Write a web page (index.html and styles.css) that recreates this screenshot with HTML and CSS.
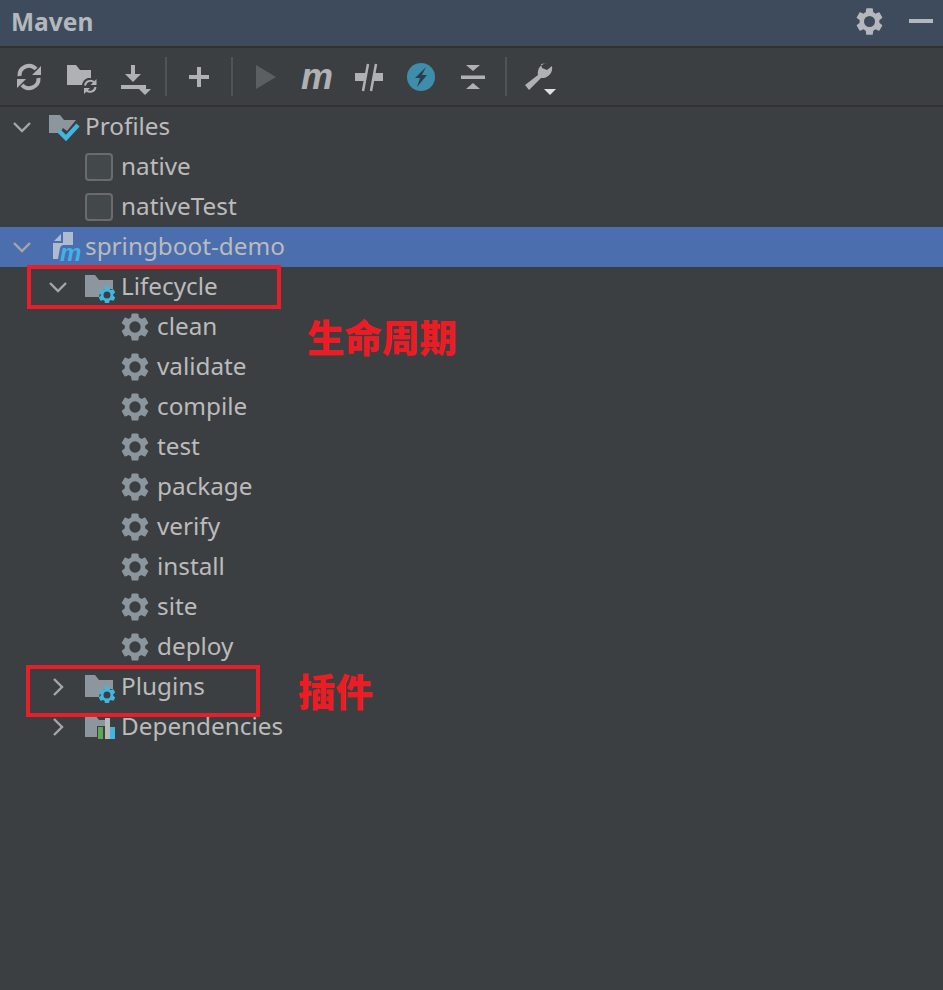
FILE: index.html
```html
<!DOCTYPE html>
<html lang="en">
<head>
<meta charset="utf-8">
<title>Maven</title>
<link rel="stylesheet" href="styles.css">
</head>
<body>
<svg class="defs" width="0" height="0" aria-hidden="true">
  <defs>
    <symbol id="gear" viewBox="0 0 24 24"><path fill-rule="evenodd" d="M19.14 12.94c.04-.3.06-.61.06-.94 0-.32-.02-.64-.07-.94l2.03-1.58a.49.49 0 0 0 .12-.61l-1.92-3.32a.488.488 0 0 0-.59-.22l-2.39.96c-.5-.38-1.03-.7-1.62-.94l-.36-2.54a.484.484 0 0 0-.48-.41h-3.84c-.24 0-.43.17-.47.41l-.36 2.54c-.59.24-1.13.57-1.62.94l-2.39-.96c-.22-.08-.47 0-.59.22L2.74 8.87c-.12.21-.08.47.12.61l2.03 1.58c-.05.3-.09.63-.09.94s.02.64.07.94l-2.03 1.58a.49.49 0 0 0-.12.61l1.92 3.32c.12.22.37.29.59.22l2.39-.96c.5.38 1.03.7 1.62.94l.36 2.54c.05.24.24.41.48.41h3.84c.24 0 .44-.17.47-.41l.36-2.54c.59-.24 1.13-.56 1.62-.94l2.39.96c.22.08.47 0 .59-.22l1.92-3.32c.12-.22.07-.47-.12-.61l-2.01-1.58zM12 16a4 4 0 1 1 0-8 4 4 0 0 1 0 8z"/></symbol>
    <symbol id="chev-down" viewBox="0 0 20 20"><path d="M2 6l8 8 8-8" fill="none" stroke="currentColor" stroke-width="2.4"/></symbol>
    <symbol id="chev-right" viewBox="0 0 20 20"><path d="M6 2l8 8-8 8" fill="none" stroke="currentColor" stroke-width="2.4"/></symbol>
    <symbol id="gear-folder" viewBox="0 0 30 32">
      <path class="folder" d="M0 4h10l4 5h14v9h-8a10 10 0 0 0-6 8H0z"/>
      <use href="#gear" x="11.500" y="13.500" width="21" height="21" class="blue"/>
    </symbol>
  </defs>
</svg>

<main class="panel">
  <header class="title-bar">
    <h1 class="title">Maven</h1>
    <div class="title-actions">
      <svg class="title-gear" width="33" height="33"><use href="#gear"/></svg>
      <span class="minimize"></span>
    </div>
  </header>

  <div class="toolbar">
    <button class="tool" aria-label="Reload"><svg viewBox="3 59 52 36" width="52" height="36"><g fill="none" stroke="#afb1b3" stroke-width="4"><path d="M19.500 76a9.500 9.500 0 0 1 16.500-7"/><path d="M38.500 78a9.500 9.500 0 0 1-16.500 7"/></g><path fill="#afb1b3" d="M41 66v9H32zM17 88V79h9z"/></svg></button>
    <button class="tool" aria-label="Generate"><svg viewBox="55 59 52 36" width="52" height="36"><path fill="#afb1b3" d="M67 65h9l4 5h11v8h-3a9 9 0 0 0-6 7H67z"/><g fill="none" stroke="#afb1b3" stroke-width="2"><path d="M85 85.500a5.500 5.500 0 0 1 9-3.500"/><path d="M95.500 87a5.500 5.500 0 0 1-9 3.500"/></g><path fill="#afb1b3" d="M96.500 79v6h-6zM84 94v-6h6z"/></svg></button>
    <button class="tool" aria-label="Download"><svg viewBox="107 59 52 36" width="52" height="36"><path fill="#afb1b3" d="M131 65h4v9h6l-8 8-8-8h6zM121 85h25v4h-25zM139 89h12l-6 6z"/></svg></button>
    <span class="sep"></span>
    <button class="tool" aria-label="Add"><svg viewBox="173 59 52 36" width="52" height="36"><path fill="#afb1b3" d="M197 67h4v8h8v4h-8v8h-4v-8h-8v-4h8z"/></svg></button>
    <span class="sep"></span>
    <button class="tool" aria-label="Run"><svg viewBox="240 59 52 36" width="52" height="36"><path fill="#5c5f61" d="M257 65l20 12-20 12z"/></svg></button>
    <button class="tool tool-m" aria-label="Execute goal"><span class="m-glyph">m</span></button>
    <button class="tool" aria-label="Skip tests"><svg viewBox="343 59 52 36" width="52" height="36"><path fill="#afb1b3" d="M355 73h10v8h-10zM373 73h10v8h-10z"/><path stroke="#afb1b3" stroke-width="2.500" d="M368 64l-5 27M376 64l-5 27"/></svg></button>
    <button class="tool" aria-label="Offline"><svg viewBox="395 59 52 36" width="52" height="36"><circle cx="421" cy="77" r="14" fill="#3f8dac"/><path fill="#2a3f4b" d="M426 67l-11 11h5l-3 9 10-12h-5z"/></svg></button>
    <button class="tool" aria-label="Collapse all"><svg viewBox="447 59 52 36" width="52" height="36"><path fill="#afb1b3" d="M461 75.500h24v3.500h-24zM466 65h14l-7 6zM473 83l7 6h-14z"/></svg></button>
    <span class="sep"></span>
    <button class="tool" aria-label="Settings"><svg viewBox="514 59 52 36" width="52" height="36"><path fill="#afb1b3" d="M549 63a10 10 0 0 0-10 12l-13 10 4 5 12-12a10 10 0 0 0 11-12l-5 4-5-2-1-4z"/><path fill="#e0e0e0" d="M545 89h12l-6 6z"/></svg></button>
  </div>

  <ul class="tree">
    <li class="row level-0">
      <svg class="chev"><use href="#chev-down"/></svg>
      <svg class="node-icon" viewBox="0 0 30 30"><path class="folder" d="M0 3h11l4 5h12l-9 11-4-3-3 5H0z"/><path d="M10 19l7 7 12-13" fill="none" stroke="#40b6e0" stroke-width="4.500"/></svg>
      <span class="label">Profiles</span>
    </li>
    <li class="row level-1 no-chev">
      <span class="checkbox"></span><span class="label">native</span>
    </li>
    <li class="row level-1 no-chev">
      <span class="checkbox"></span><span class="label">nativeTest</span>
    </li>
    <li class="row level-0 selected">
      <svg class="chev"><use href="#chev-down"/></svg>
      <svg class="node-icon" viewBox="0 0 30 30"><path class="module" d="M5 9l7-7v7zM14 0h10v13H14a4 4 0 0 0-3 3l-2 11H4V11h10z"/><text class="module-m" x="11" y="29">m</text></svg>
      <span class="label">springboot-demo</span>
    </li>
    <li class="row level-1">
      <svg class="chev"><use href="#chev-down"/></svg>
      <svg class="node-icon tall"><use href="#gear-folder"/></svg>
      <span class="label">Lifecycle</span>
    </li>
    <li class="row level-2"><svg class="gear-icon"><use href="#gear"/></svg><span class="label">clean</span></li>
    <li class="row level-2"><svg class="gear-icon"><use href="#gear"/></svg><span class="label">validate</span></li>
    <li class="row level-2"><svg class="gear-icon"><use href="#gear"/></svg><span class="label">compile</span></li>
    <li class="row level-2"><svg class="gear-icon"><use href="#gear"/></svg><span class="label">test</span></li>
    <li class="row level-2"><svg class="gear-icon"><use href="#gear"/></svg><span class="label">package</span></li>
    <li class="row level-2"><svg class="gear-icon"><use href="#gear"/></svg><span class="label">verify</span></li>
    <li class="row level-2"><svg class="gear-icon"><use href="#gear"/></svg><span class="label">install</span></li>
    <li class="row level-2"><svg class="gear-icon"><use href="#gear"/></svg><span class="label">site</span></li>
    <li class="row level-2"><svg class="gear-icon"><use href="#gear"/></svg><span class="label">deploy</span></li>
    <li class="row level-1">
      <svg class="chev"><use href="#chev-right"/></svg>
      <svg class="node-icon tall"><use href="#gear-folder"/></svg>
      <span class="label">Plugins</span>
    </li>
    <li class="row level-1">
      <svg class="chev"><use href="#chev-right"/></svg>
      <svg class="node-icon" viewBox="0 0 30 30"><path class="folder" d="M0 3h10l4 5h14v0h-8v6h-8v11H0z"/><path fill="#5aa754" d="M13 15h5v12h-5z"/><path fill="#b5b9bc" d="M20 6h5v21h-5z"/><path fill="#40b6e0" d="M25 15h5v12h-5z"/></svg>
      <span class="label">Dependencies</span>
    </li>
  </ul>

  <div class="mark mark-lifecycle"></div>
  <div class="mark mark-plugins"></div>
  <div class="note note-lifecycle">生命周期</div>
  <div class="note note-plugins">插件</div>
</main>
</body>
</html>
```

FILE: styles.css
```css
* { box-sizing: border-box; }
html, body { margin: 0; height: 100%; overflow: hidden; background: #3c3f41; }
.defs { position: absolute; }

.panel {
  position: relative;
  width: 943px;
  height: 990px;
  background: #3c3f41;
  font-family: "Noto Sans", "Noto Sans CJK SC", sans-serif;
  color: #bbbbbb;
}

.title-bar {
  height: 48px;
  display: flex;
  align-items: center;
  justify-content: space-between;
  padding: 0 10px 4px 11px;
  background: #3d4b5c;
  border-bottom: 2px solid #323232;
}
.title {
  margin: 2px 0 0;
  font-size: 24.500px;
  font-weight: 700;
  line-height: 30px;
  color: #b4b8bd;
}
.title-actions { display: flex; align-items: center; gap: 23px; }
.title-gear { fill: #b4b8bd; display: block; }
.minimize { width: 24px; height: 4px; background: #b4b8bd; }

.toolbar {
  height: 59px;
  display: flex;
  align-items: center;
  padding-left: 3px;
  border-bottom: 2px solid #323232;
}
.tool {
  width: 52px;
  height: 36px;
  padding: 0;
  border: 0;
  background: none;
  flex: none;
}
.tool svg { display: block; }
.m-glyph {
  display: block;
  font: italic 700 36px/34px "Liberation Sans", sans-serif;
  color: #afb1b3;
  text-align: center;
}
.sep {
  flex: none;
  width: 2px;
  height: 39px;
  margin: 0 6px;
  background: #515456;
}

.tree { list-style: none; margin: 0; padding: 0; }
.row {
  height: 40px;
  display: flex;
  align-items: center;
  font-size: 24.300px;
  white-space: nowrap;
}
.row.selected { background: #4b6eaf; }
.level-0 { padding-left: 12px; }
.level-1 { padding-left: 48px; }
.level-1.no-chev { padding-left: 85px; }
.level-2 { padding-left: 118px; }
.label { margin-top: -4px; }

.chev { width: 20px; height: 20px; margin-right: 16px; color: #a4a6a8; flex: none; }
.node-icon { width: 30px; height: 30px; margin-right: 6px; flex: none; overflow: visible; }
.node-icon.tall { height: 32px; }
.level-0 .node-icon { margin-left: 1px; margin-right: 6px; }
.level-1 .chev { margin-right: 17px; }
.folder { fill: #8d969e; }
.blue { fill: #40b6e0; }
.module { fill: #aebccf; }
.module-m { font: italic 700 24px "Liberation Sans", sans-serif; fill: #3fb2e6; }

.gear-icon { width: 34px; height: 34px; margin-right: 5px; fill: #8b959d; flex: none; }
.checkbox {
  width: 28px;
  height: 28px;
  margin-right: 8px;
  border: 2px solid #6b6b6b;
  border-radius: 4px;
  background: #43494a;
  flex: none;
}

.mark { position: absolute; border: 4px solid #e5202a; }
.mark-lifecycle { left: 27px; top: 265px; width: 254px; height: 44px; }
.mark-plugins { left: 26px; top: 665px; width: 234px; height: 52px; }
.note {
  position: absolute;
  font-family: "Noto Sans CJK SC", sans-serif;
  font-size: 37.500px;
  font-weight: 900;
  line-height: 44px;
  color: #ed1c24;
}
.note-lifecycle { left: 307px; top: 314px; }
.note-plugins { left: 298px; top: 668px; }
```
